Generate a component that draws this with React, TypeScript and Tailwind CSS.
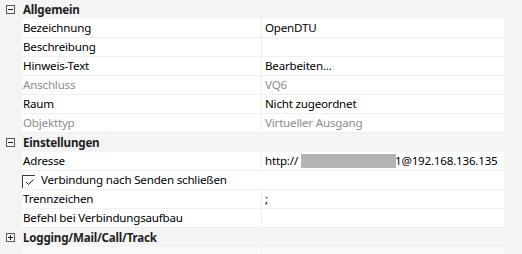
import React from "react";

type Row = { label: string; value?: React.ReactNode; disabled?: boolean };

function Box({ plus }: { plus?: boolean }) {
  return (
    <svg width="9" height="9" viewBox="0 0 9 9" className="block">
      <rect x="0.5" y="0.5" width="8" height="8" fill="none" stroke="#5a5a5a" />
      <line x1="2" y1="4.5" x2="7" y2="4.5" stroke="#1e1e1e" />
      {plus && <line x1="4.5" y1="2" x2="4.5" y2="7" stroke="#1e1e1e" />}
    </svg>
  );
}

function Header({ title, plus }: { title: string; plus?: boolean }) {
  return (
    <div className="flex h-[19px] items-center">
      <div className="w-[22px] h-full flex items-center pl-[6px]">
        <Box plus={plus} />
      </div>
      <div className="pl-[1px] font-bold text-[#1e1e1e] leading-[19px]">{title}</div>
    </div>
  );
}

function ItemRow({ label, value, disabled }: Row) {
  const color = disabled ? "text-[#8d8d8d]" : "text-[#000000]";
  return (
    <div className="flex h-[19px]">
      <div className="w-[22px]" />
      <div className="flex w-[482px] bg-white border-b border-[#f0f0f0]">
        <div className={`w-[240px] pl-[1px] leading-[18px] border-r border-[#f0f0f0] ${color}`}>{label}</div>
        <div className={`flex-1 pl-[3px] leading-[18px] whitespace-nowrap ${color}`}>{value}</div>
      </div>
    </div>
  );
}

export default function App() {
  return (
    <div
      className="w-[522px] h-[254px] overflow-hidden bg-[#f4f4f4] text-[11.6px] tracking-[-0.2px]"
      style={{ fontFamily: '"Segoe UI", "Noto Sans", sans-serif' }}
    >
      <Header title="Allgemein" />
      <ItemRow label="Bezeichnung" value="OpenDTU" />
      <ItemRow label="Beschreibung" value="" />
      <ItemRow label="Hinweis-Text" value="Bearbeiten..." />
      <ItemRow label="Anschluss" value="VQ6" disabled />
      <ItemRow label="Raum" value="Nicht zugeordnet" />
      <ItemRow label="Objekttyp" value="Virtueller Ausgang" disabled />
      <Header title="Einstellungen" />
      <ItemRow
        label="Adresse"
        value={
          <span className="flex items-center h-[18px]">
            <span>http://</span>
            <span className="inline-block w-[95px] h-[14px] bg-[#b4b4b4] ml-[3px] mr-[-1px]" />
            <span>1@192.168.136.135</span>
          </span>
        }
      />
      <div className="flex h-[19px]">
        <div className="w-[22px]" />
        <div className="flex w-[482px] bg-white border-b border-[#f0f0f0] items-center">
          <div className="relative w-[13px] h-[13px] border-l border-t border-[#3c3c3c] mt-[2px]">
            <svg width="10" height="8" viewBox="0 0 10 8" className="absolute left-[2px] top-[2px]">
              <polyline points="1,4 3.5,6.5 8.5,1.5" fill="none" stroke="#1e1e1e" strokeWidth="1" />
            </svg>
          </div>
          <div className="pl-[6px] leading-[18px] text-black whitespace-nowrap">Verbindung nach Senden schließen</div>
        </div>
      </div>
      <ItemRow label="Trennzeichen" value=";" />
      <ItemRow label="Befehl bei Verbindungsaufbau" value="" />
      <Header title="Logging/Mail/Call/Track" plus />
      <div className="flex h-[19px]">
        <div className="w-[22px]" />
        <div className="flex w-[482px] bg-[#fafafa]">
          <div className="w-[240px] border-r border-[#f0f0f0]" />
        </div>
      </div>
    </div>
  );
}
